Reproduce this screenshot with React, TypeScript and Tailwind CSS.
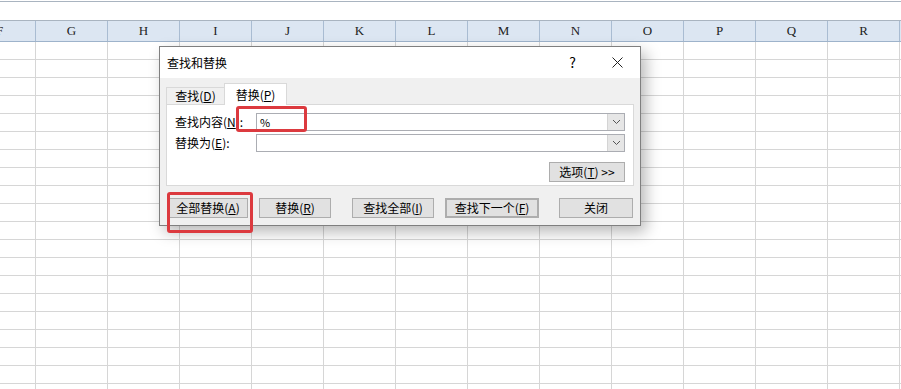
import React from 'react'

const cols = ['G', 'H', 'I', 'J', 'K', 'L', 'M', 'N', 'O', 'P', 'Q', 'R']
const rows = Array.from({ length: 20 }, (_, i) => i)

function Chevron() {
  return (
    <svg width="9" height="6" viewBox="0 0 9 6">
      <path d="M1 1 L4.5 4.5 L8 1" fill="none" stroke="#555" strokeWidth="1" />
    </svg>
  )
}

function ComboBox({ value }: { value?: string }) {
  return (
    <div className="flex h-[18px] flex-1 items-stretch border border-[#abadb3] bg-white">
      <div className="flex-1 pl-[3px] text-[11px] leading-[16px] text-black">{value}</div>
      <div className="flex w-[17px] items-center justify-center border-l border-[#d4d4d4] bg-[#e6e6e6]">
        <Chevron />
      </div>
    </div>
  )
}

function Btn({ children, className }: { children: React.ReactNode; className?: string }) {
  return (
    <div
      className={
        'flex h-[20px] items-center justify-center border border-[#adadad] bg-[#e1e1e1] text-[12px] text-black ' +
        (className || '')
      }
    >
      {children}
    </div>
  )
}

export default function App() {
  return (
    <div
      className="relative h-[389px] w-[901px] overflow-hidden bg-white"
      style={{ fontFamily: '"Noto Sans CJK SC", "Liberation Sans", sans-serif' }}
    >
      {/* formula bar strip */}
      <div className="mt-[1px] h-[20px] border-t border-b border-[#a9b4c0] bg-white" />

      {/* column headers */}
      <div className="flex h-[21px] border-b border-[#9eb3cb] bg-[#dce6f2] text-[13px] text-[#222]" style={{ fontFamily: '"Liberation Serif", serif' }}>
        <div className="-ml-[36px] flex w-[72px] shrink-0 items-center justify-center border-r border-[#a9bcd2]">F</div>
        {cols.map((c) => (
          <div key={c} className="flex w-[72px] shrink-0 items-center justify-center border-r border-[#a9bcd2]">
            {c}
          </div>
        ))}
      </div>

      {/* grid */}
      {rows.map((r) => (
        <div key={r} className="flex h-[18px] border-b border-[#d6d6d6]">
          <div className="w-[36px] shrink-0 border-r border-[#d6d6d6]" />
          {cols.map((c) => (
            <div key={c} className="w-[72px] shrink-0 border-r border-[#d6d6d6]" />
          ))}
        </div>
      ))}

      {/* find & replace dialog */}
      <div className="absolute left-[159px] top-[46px] w-[482px] border border-[#7f7f7f] bg-[#f0f0f0] text-[12px] text-black shadow-[5px_6px_14px_rgba(0,0,0,0.28)]">
        <div className="flex h-[31px] items-center bg-white">
          <div className="pl-[7px] text-[12px]">查找和替换</div>
          <div className="ml-auto flex w-[45px] justify-center text-[14px]">?</div>
          <div className="flex w-[45px] justify-center">
            <svg width="11" height="11" viewBox="0 0 11 11">
              <path d="M0.5 0.5 L10.5 10.5 M10.5 0.5 L0.5 10.5" stroke="#222" strokeWidth="1" />
            </svg>
          </div>
        </div>

        <div className="px-[6px] pt-[5px] pb-[7px]">
          {/* tabs */}
          <div className="relative z-10 flex h-[21px] items-end">
            <div className="flex h-[17px] w-[59px] items-center justify-center border border-b-0 border-[#d9d9d9] bg-[#f0f0f0]">
              查找(<u>D</u>)
            </div>
            <div className="-mb-px -ml-px flex h-[22px] w-[63px] items-center justify-center border border-b-0 border-[#d9d9d9] bg-white">
              替换(<u>P</u>)
            </div>
          </div>

          {/* tab panel */}
          <div className="h-[82px] border border-[#d9d9d9] bg-white pt-[8px] pl-[8px] pr-[8px]">
            <div className="flex items-center">
              <div className="w-[81px] shrink-0">查找内容(<u>N</u>):</div>
              <ComboBox value="%" />
            </div>
            <div className="mt-[3px] flex items-center">
              <div className="w-[81px] shrink-0">替换为(<u>E</u>):</div>
              <ComboBox />
            </div>
            <div className="mt-[10px] flex justify-end">
              <Btn className="w-[76px]">
                选项(<u>T</u>)&nbsp;&gt;&gt;
              </Btn>
            </div>
          </div>

          {/* buttons */}
          <div className="mt-[12px] flex">
            <Btn className="ml-[2px] w-[80px]">全部替换(<u>A</u>)</Btn>
            <Btn className="ml-[11px] w-[72px]">替换(<u>R</u>)</Btn>
            <Btn className="ml-[21px] w-[82px]">查找全部(<u>I</u>)</Btn>
            <Btn className="ml-[11px] w-[94px] border-2 border-[#2a70b5]">查找下一个(<u>F</u>)</Btn>
            <Btn className="ml-[20px] w-[74px]">关闭</Btn>
          </div>
        </div>
      </div>

      {/* annotation boxes */}
      <div className="absolute left-[236px] top-[106px] h-[26px] w-[71px] rounded-[3px] border-[3px] border-[#dc3a3f]" />
      <div className="absolute left-[167px] top-[192px] h-[41px] w-[86px] rounded-[3px] border-[3px] border-[#dc3a3f]" />
    </div>
  )
}
